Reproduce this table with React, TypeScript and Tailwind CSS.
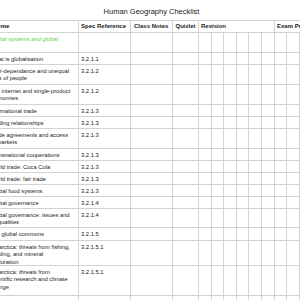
import React from "react";

type Row = {
  theme: string[];
  spec: string;
  h: string;
  green?: boolean;
};

// Column widths include the 1px right border of each cell.
const FIXED = ["w-[89px]", "w-[52px]", "w-[42px]", "w-[26px]"];
const REVISION = ["w-[13px]", "w-[12px]", "w-[13px]", "w-[12px]", "w-[13px]", "w-[13px]"];
const EXAM = ["w-[12px]", "w-[13px]", "w-[13px]", "w-[13px]"];

const ROWS: Row[] = [
  { theme: ["Global systems and global"], spec: "", h: "h-[20px]", green: true },
  { theme: ["What is globalisation"], spec: "3.2.1.1", h: "h-[12px]" },
  { theme: ["Inter-dependance and unequal", "lives of people"], spec: "3.2.1.2", h: "h-[20px]" },
  { theme: ["The internet and single-product", "economies"], spec: "3.2.1.2", h: "h-[20px]" },
  { theme: ["International trade"], spec: "3.2.1.3", h: "h-[12px]" },
  { theme: ["Trading relationships"], spec: "3.2.1.3", h: "h-[12px]" },
  { theme: ["Trade agreements and access", "to markets"], spec: "3.2.1.3", h: "h-[20px]" },
  { theme: ["Transnational cooperations"], spec: "3.2.1.3", h: "h-[12px]" },
  { theme: ["World trade: Coca Cola"], spec: "3.2.1.3", h: "h-[12px]" },
  { theme: ["World trade: fair trade"], spec: "3.2.1.3", h: "h-[12px]" },
  { theme: ["Global food systems"], spec: "3.2.1.3", h: "h-[12px]" },
  { theme: ["Global governance"], spec: "3.2.1.4", h: "h-[12px]" },
  { theme: ["Global governance: issues and", "inequalities"], spec: "3.2.1.4", h: "h-[19px]" },
  { theme: ["The global commons"], spec: "3.2.1.5", h: "h-[13px]" },
  {
    theme: ["Antarctica: threats from fishing,", "whaling, and mineral", "exploration"],
    spec: "3.2.1.5.1",
    h: "h-[25px]",
  },
  {
    theme: ["Antarctica: threats from", "scientific research and climate", "change"],
    spec: "3.2.1.5.1",
    h: "h-[30px]",
  },
  { theme: ["Antarctica: protection and", "governance"], spec: "3.2.1.5.2", h: "h-[20px]" },
];

const cell = "shrink-0 border-r border-[#d3d3d3]";

export default function App() {
  return (
    <div
      className="h-[300px] w-[300px] overflow-hidden bg-white text-[#222]"
      style={{ fontFamily: '"Liberation Sans", Arial, sans-serif' }}
    >
      <div className="h-[20px] pl-[3px] pt-[7px] text-center text-[7.5px] leading-[9px] whitespace-nowrap">
        Human Geography Checklist
      </div>

      <div className="-ml-[10px] w-max">
        {/* header */}
        <div className="flex h-[13px] border-y border-[#d3d3d3] text-[6px] font-bold leading-[7px] whitespace-nowrap">
          <div className={`${cell} ${FIXED[0]} flex items-center`}>Theme</div>
          <div className={`${cell} ${FIXED[1]} flex items-center pl-[2px]`}>Spec Reference</div>
          <div className={`${cell} ${FIXED[2]} flex items-center pl-[3px]`}>Class Notes</div>
          <div className={`${cell} ${FIXED[3]} flex items-center pl-[2.5px]`}>Quizlet</div>
          <div className={`${cell} w-[76px] flex items-center pl-[2px]`}>Revision</div>
          <div className="w-[60px] shrink-0 flex items-center pl-[2px]">Exam Practice</div>
        </div>

        {ROWS.map((row, i) => (
          <div
            key={i}
            className={`flex ${row.h} border-b border-[#d3d3d3] text-[5.8px] leading-[7.5px] whitespace-nowrap`}
          >
            <div
              className={`${cell} ${FIXED[0]} pt-[2.5px] ${
                row.green ? "italic text-[#62cf3f]" : ""
              }`}
            >
              {row.theme.map((line, j) => (
                <div key={j}>{line}</div>
              ))}
            </div>
            <div className={`${cell} ${FIXED[1]} pl-[2px] pt-[2.5px]`}>{row.spec}</div>
            <div className={`${cell} ${FIXED[2]}`} />
            <div className={`${cell} ${FIXED[3]}`} />
            {REVISION.map((w, j) => (
              <div key={`r${j}`} className={`${cell} ${w}`} />
            ))}
            {EXAM.map((w, j) => (
              <div key={`e${j}`} className={`${cell} ${w}`} />
            ))}
          </div>
        ))}
      </div>
    </div>
  );
}
